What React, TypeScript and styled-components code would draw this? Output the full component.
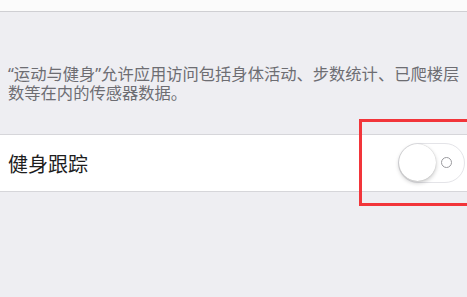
import React from "react";
import styled, { createGlobalStyle } from "styled-components";

const GlobalStyle = createGlobalStyle`
  html, body {
    margin: 0;
    padding: 0;
    background: #eeeef2;
    overflow: hidden;
  }
  body {
    font-family: "Noto Sans CJK SC", "Noto Sans", sans-serif;
  }
`;

const Page = styled.div`
  position: relative;
  width: 467px;
  height: 297px;
  background: #eeeef2;
  display: flex;
  flex-direction: column;
`;

const TopBar = styled.div`
  height: 11px;
  background: #fbfbfb;
  border-bottom: 1px solid #cfcfd3;
`;

const Description = styled.p`
  margin: 53px 0 0 0;
  padding: 0 0 0 8px;
  font-family: "Noto Sans", "Noto Sans CJK SC", sans-serif;
  font-size: 16.3px;
  line-height: 19px;
  color: #6d6d72;
`;

const Row = styled.div`
  margin-top: 31px;
  height: 56px;
  background: #ffffff;
  border-top: 1px solid #d6d6da;
  border-bottom: 1px solid #d6d6da;
  display: flex;
  align-items: center;
  justify-content: space-between;
  padding: 0 2px 0 8px;
`;

const Label = styled.span`
  font-size: 20px;
  color: #1e1e1e;
  line-height: 1;
  margin-top: 2px;
`;

const Track = styled.div`
  position: relative;
  box-sizing: border-box;
  width: 67px;
  height: 40px;
  border-radius: 20px;
  border: 1.5px solid #e4e4e8;
  background: #fff;
  display: flex;
  align-items: center;
  justify-content: flex-end;
  padding-right: 12px;
  margin-top: -1px;
`;

const OffMark = styled.span`
  width: 9px;
  height: 9px;
  border-radius: 50%;
  border: 1.5px solid #9a9a9e;
`;

const Knob = styled.span`
  position: absolute;
  left: 0px;
  top: 0px;
  width: 37px;
  height: 37px;
  border-radius: 50%;
  background: #fff;
  box-shadow: 0 2px 4px rgba(0, 0, 0, 0.22), 0 0 1px rgba(0, 0, 0, 0.25);
`;

const Highlight = styled.div`
  position: absolute;
  left: 359px;
  top: 119px;
  width: 130px;
  height: 87px;
  box-sizing: border-box;
  border: 3px solid #f2353a;
  pointer-events: none;
`;

export default function App() {
  return (
    <>
      <GlobalStyle />
      <Page>
        <TopBar />
        <Description>
          “运动与健身”允许应用访问包括身体活动、步数统计、已爬楼层数等在内的传感器数据。
        </Description>
        <Row>
          <Label>健身跟踪</Label>
          <Track>
            <Knob />
            <OffMark />
          </Track>
        </Row>
        <Highlight />
      </Page>
    </>
  );
}
